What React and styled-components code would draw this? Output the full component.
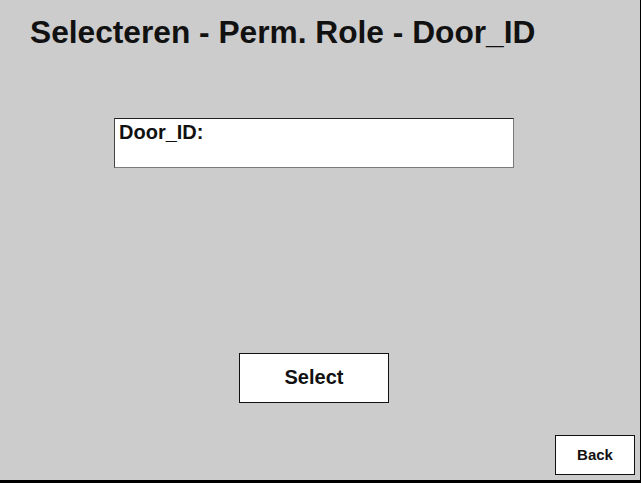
import React from 'react';
import styled, { createGlobalStyle } from 'styled-components';

const GlobalStyle = createGlobalStyle`
  html, body {
    margin: 0;
    padding: 0;
    background: #000;
  }
  body {
    font-family: 'Liberation Sans', Arial, sans-serif;
  }
`;

const Screen = styled.div`
  width: 640px;
  height: 480px;
  background: #cccccc;
  display: flex;
  flex-direction: column;
  align-items: flex-start;
  box-sizing: border-box;
`;

const Title = styled.h1`
  margin: 0;
  padding: 16px 0 0 30px;
  font-size: 31.7px;
  line-height: 32px;
  font-weight: 700;
  color: #111;
  white-space: nowrap;
`;

const Field = styled.div`
  margin: 70px 0 0 114px;
  width: 400px;
  height: 50px;
  box-sizing: border-box;
  background: #fff;
  border-style: solid;
  border-width: 1px;
  border-color: #222 #7a7a7a #7a7a7a #444;
  padding: 2px 0 0 4px;
`;

const Label = styled.span`
  font-size: 20px;
  font-weight: 700;
  color: #111;
`;

const Button = styled.button`
  box-sizing: border-box;
  width: ${(p) => p.$w}px;
  height: ${(p) => p.$h}px;
  background: #fff;
  border: 1px solid #111;
  font-family: 'Liberation Sans', Arial, sans-serif;
  font-size: ${(p) => p.$size}px;
  font-weight: 700;
  color: #111;
  padding: 0 0 ${(p) => p.$lift}px;
  display: flex;
  align-items: center;
  justify-content: center;
`;

const SelectButton = styled(Button)`
  margin: 185px 0 0 239px;
`;

const BackButton = styled(Button)`
  margin: auto 5px 5px 0;
  align-self: flex-end;
`;

export default function App() {
  return (
    <>
      <GlobalStyle />
      <Screen>
        <Title>Selecteren - Perm. Role - Door_ID</Title>
        <Field>
          <Label>Door_ID:</Label>
        </Field>
        <SelectButton $w={150} $h={50} $size={20} $lift={2}>Select</SelectButton>
        <BackButton $w={80} $h={40} $size={15} $lift={1}>Back</BackButton>
      </Screen>
    </>
  );
}
